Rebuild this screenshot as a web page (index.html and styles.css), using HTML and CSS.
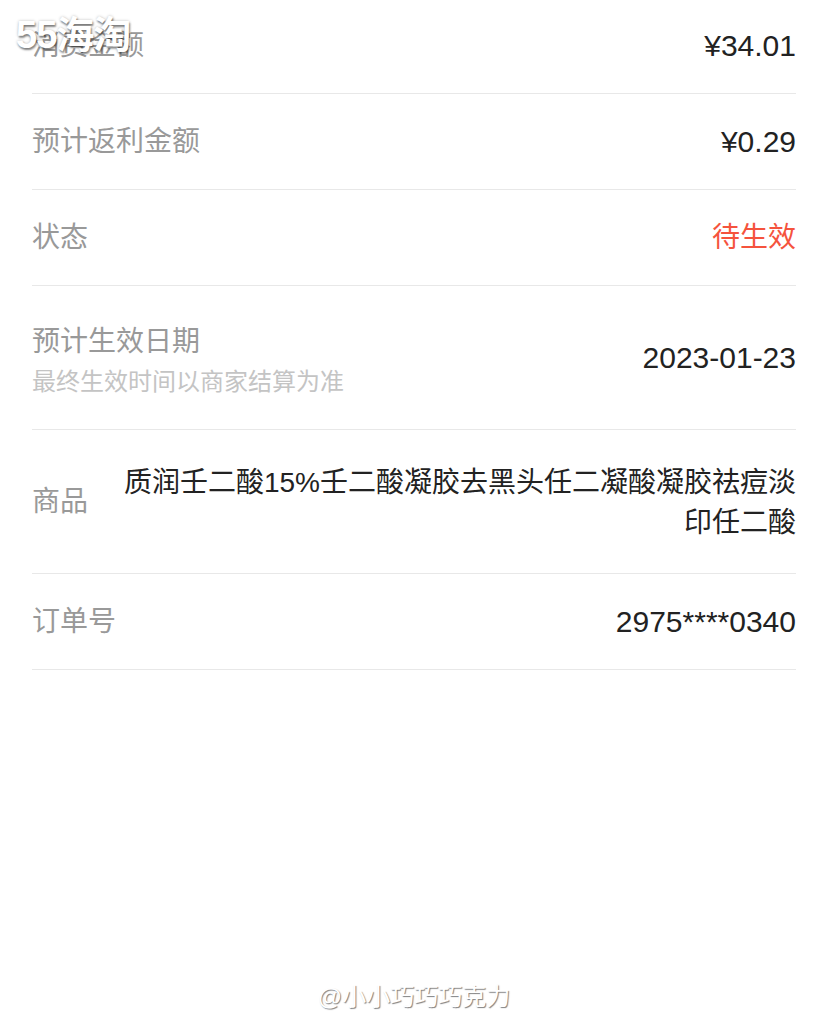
FILE: index.html
```html
<!DOCTYPE html>
<html lang="zh-CN">
  <head>
    <meta charset="UTF-8" />
    <title>返利详情</title>
    <link rel="stylesheet" href="styles.css">
  </head>

  <body>
    <!-- 明细列表 -->
    <div class="detail">
      <div class="row">
        <div class="label">消费金额</div>
        <div class="value num">¥34.01</div>
      </div>
      <div class="row">
        <div class="label">预计返利金额</div>
        <div class="value num">¥0.29</div>
      </div>
      <div class="row">
        <div class="label">状态</div>
        <div class="value red">待生效</div>
      </div>
      <div class="row tall">
        <div class="label two-line">
          预计生效日期
          <div class="sub">最终生效时间以商家结算为准</div>
        </div>
        <div class="value num">2023-01-23</div>
      </div>
      <div class="row tall">
        <div class="label">商品</div>
        <div class="value goods">质润壬二酸15%壬二酸凝胶去黑头任二凝酸凝胶祛痘淡印任二酸</div>
      </div>
      <div class="row">
        <div class="label">订单号</div>
        <div class="value num">2975****0340</div>
      </div>
    </div>

    <!-- 水印 -->
    <div class="mark-top">55海淘</div>
    <div class="mark-bottom">@小小巧巧巧克力</div>
  </body>
</html>
```

FILE: styles.css
```css
body {
  margin: 0;
  background-color: #fff;
  font-family: "Liberation Sans", "Noto Sans CJK SC", sans-serif;
  height: 1036px;
  overflow: hidden;
  position: relative;
}

.detail {
  margin: -2px 32px 0;
}

.row {
  display: flex;
  align-items: center;
  justify-content: space-between;
  height: 95px;
  border-bottom: 1px solid #e8e8e8;
}

.row.tall {
  height: 143px;
}

.label {
  font-size: 28px;
  line-height: 40px;
  color: #999;
  flex-shrink: 0;
}

.two-line {
  padding-top: 9px;
}

.sub {
  font-size: 24px;
  line-height: 40px;
  color: #c4c4c4;
}

.value {
  font-size: 28px;
  line-height: 40px;
  color: #222;
  text-align: right;
}

.num {
  font-size: 30px;
}

.red {
  color: #f5533d;
}

.goods {
  flex: 1;
  margin-left: 20px;
  padding-top: 2px;
}

/* 水印 */
.mark-top {
  position: absolute;
  left: 16px;
  top: 13px;
  font-size: 38px;
  line-height: 44px;
  font-weight: bold;
  color: #fff;
  letter-spacing: -1px;
  text-shadow: 1px 2px 2px rgba(0, 0, 0, 0.45), 0 0 3px rgba(0, 0, 0, 0.25);
}

.mark-bottom {
  position: absolute;
  left: 0;
  right: 0;
  top: 980px;
  text-align: center;
  font-size: 24px;
  line-height: 34px;
  color: #fff;
  text-shadow: 1px 1px 1px rgba(0, 0, 0, 0.5);
}
```
